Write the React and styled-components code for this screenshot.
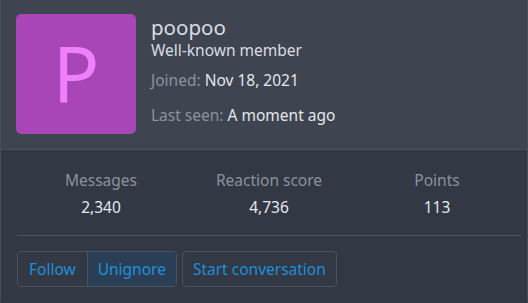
import React from 'react';
import styled, { createGlobalStyle } from 'styled-components';

const GlobalStyle = createGlobalStyle`
  html, body {
    margin: 0;
    padding: 0;
    background: #323844;
  }
  body {
    font-family: "Noto Sans", "Open Sans", sans-serif;
  }
`;

const Card = styled.div`
  width: 528px;
  box-sizing: border-box;
  border-left: 1px solid #474d59;
  border-right: 1px solid #474d59;
  background: #323844;
`;

const Header = styled.div`
  display: flex;
  gap: 15px;
  padding: 14px 15px 15px;
  background: #3e4450;
  border-bottom: 1px solid #4b515c;
`;

const Avatar = styled.div`
  width: 120px;
  height: 120px;
  flex-shrink: 0;
  border-radius: 5px;
  background: #a846b8;
  color: #f07ffb;
  display: flex;
  align-items: center;
  justify-content: center;
  font-size: 77px;
  line-height: 1;
  padding-bottom: 4px;
  box-sizing: border-box;
`;

const Info = styled.div`
  display: flex;
  flex-direction: column;
`;

const Name = styled.div`
  font-size: 20.5px;
  line-height: 26px;
  color: #d9dde3;
`;

const Title = styled.div`
  font-size: 15.5px;
  line-height: 20px;
  color: #d9dde3;
  margin-bottom: 10px;
`;

const Pair = styled.div`
  font-size: 15.5px;
  line-height: 20px;
  color: #8b929e;

  & + & {
    margin-top: 15px;
  }

  b {
    font-weight: 400;
    color: #e4e7eb;
  }
`;

const Body = styled.div`
  padding: 0 6px 15px 16px;
`;

const Stats = styled.div`
  display: grid;
  grid-template-columns: repeat(3, 1fr);
  padding: 19px 0 17px;
  border-bottom: 1px solid #4e5460;
  margin-bottom: 15px;
`;

const Stat = styled.div`
  text-align: center;
`;

const StatLabel = styled.div`
  font-size: 15.5px;
  line-height: 22px;
  color: #8b929e;
`;

const StatValue = styled.div`
  font-size: 15.5px;
  line-height: 22px;
  margin-top: 5px;
  color: #e4e7eb;
`;

const Actions = styled.div`
  display: flex;
  gap: 5px;
`;

const Group = styled.div`
  display: flex;
  border: 1px solid #4b5260;
  border-radius: 4px;
  overflow: hidden;
`;

const Button = styled.div`
  height: 34px;
  padding: 0 ${(p) => (p.$tight ? '10px' : '11px')};
  display: flex;
  align-items: center;
  font-size: 15.5px;
  color: #1e8fd8;
  background: ${(p) => (p.$active ? '#2a3f56' : 'transparent')};
  & + & {
    border-left: 1px solid #4b5260;
  }
`;

const SoloButton = styled(Button)`
  border: 1px solid #4b5260;
  border-radius: 4px;
`;

const stats = [
  { label: 'Messages', value: '2,340' },
  { label: 'Reaction score', value: '4,736' },
  { label: 'Points', value: '113' },
];

export default function App() {
  return (
    <>
      <GlobalStyle />
      <Card>
        <Header>
          <Avatar>P</Avatar>
          <Info>
            <Name>poopoo</Name>
            <Title>Well-known member</Title>
            <Pair>
              Joined: <b>Nov 18, 2021</b>
            </Pair>
            <Pair>
              Last seen: <b>A moment ago</b>
            </Pair>
          </Info>
        </Header>
        <Body>
          <Stats>
            {stats.map((s) => (
              <Stat key={s.label}>
                <StatLabel>{s.label}</StatLabel>
                <StatValue>{s.value}</StatValue>
              </Stat>
            ))}
          </Stats>
          <Actions>
            <Group>
              <Button>Follow</Button>
              <Button $active $tight>
                Unignore
              </Button>
            </Group>
            <SoloButton $tight>Start conversation</SoloButton>
          </Actions>
        </Body>
      </Card>
    </>
  );
}
